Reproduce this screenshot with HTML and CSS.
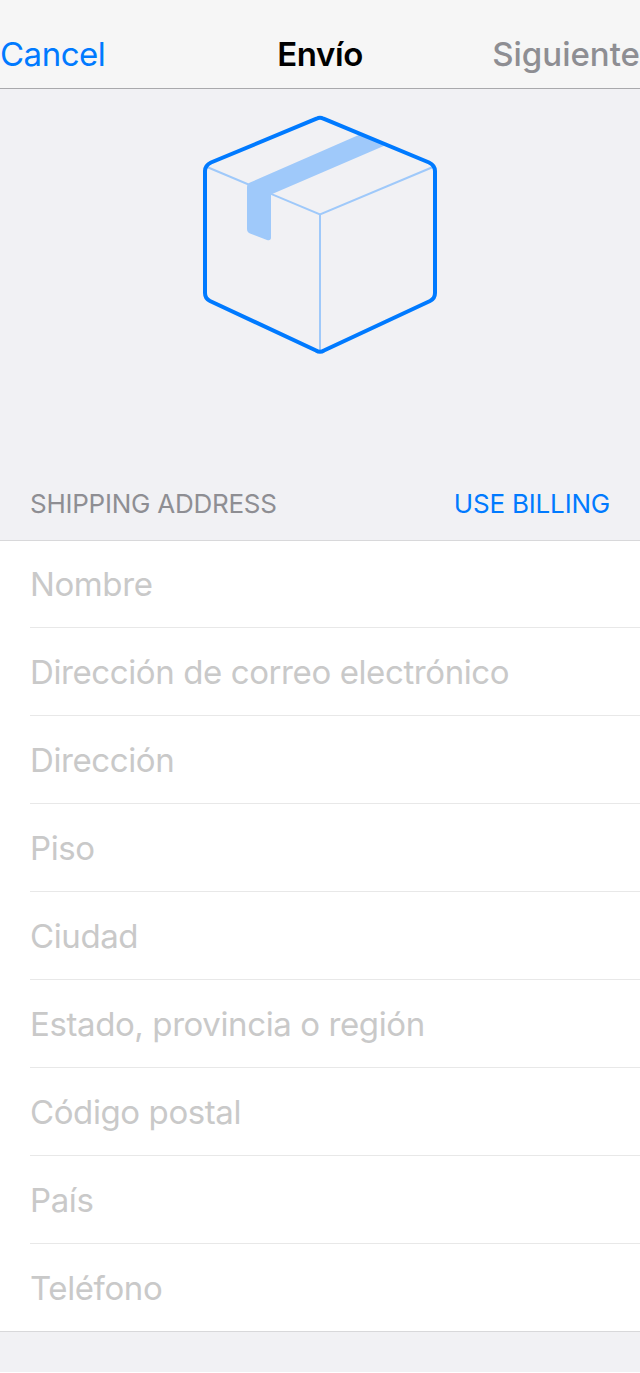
FILE: index.html
```html
<!DOCTYPE html>
<html lang="es">
<head>
<meta charset="utf-8">
<title>Envío</title>
<link rel="stylesheet" href="styles.css">
</head>
<body>
<div class="screen">
<header class="navbar">
<button class="nav-button cancel">Cancel</button>
<h1 class="title">Envío</h1>
<button class="nav-button next" disabled>Siguiente</button>
</header>
<main>
<div class="hero">
<svg class="box" width="240" height="244" viewBox="200 112 240 244" fill="none">
<path d="M207 167L320 214.500L433 167M320 215V351" stroke="#9fc9fa" stroke-width="2"/>
<path d="M361 134L250 182.500Q247 184 247 187V229Q247 232 250 233.500L267 240Q271 241 271 237.500V194.500L386 145Z" fill="#9fc9fa"/>
<path d="M316.500 118.700Q320 117 323.500 118.700L429 162.500Q435 165.500 435 171V293Q435 298.500 430 301L324 350.500Q320 353 316 350.500L210 301Q205 298.500 205 293V171Q205 165.500 211 162.500Z" stroke="#007aff" stroke-width="4"/>
</svg>
</div>
<div class="section-header">
<h2 class="section-title">SHIPPING ADDRESS</h2>
<button class="billing">USE BILLING</button>
</div>
<form class="fields">
<label class="field">Nombre</label>
<label class="field">Dirección de correo electrónico</label>
<label class="field">Dirección</label>
<label class="field">Piso</label>
<label class="field">Ciudad</label>
<label class="field">Estado, provincia o región</label>
<label class="field">Código postal</label>
<label class="field">País</label>
<label class="field">Teléfono</label>
</form>
</main>
</div>
</body>
</html>
```
FILE: styles.css
```css
*{box-sizing:border-box}
body{margin:0;background:#fff;font-family:Inter,"Liberation Sans",sans-serif}
.screen{height:1372px;background:#f1f1f4}
.navbar{height:89px;padding-top:20px;background:#f6f6f6;border-bottom:1px solid #a9a9ac;display:grid;grid-template-columns:1fr auto 1fr;align-items:center}
button{font:inherit;border:0;background:none;padding:0;margin:0}
.nav-button{font-size:33px;line-height:40px;white-space:nowrap}
.cancel{color:#007aff;justify-self:start;letter-spacing:-.5px}
.next{color:#8e8e93;justify-self:end;font-weight:500;letter-spacing:0}
.title{margin:0;font-size:33px;line-height:40px;font-weight:600;letter-spacing:-.4px;color:#000}
.hero{height:379px;padding-top:23px;display:flex;justify-content:center;align-items:flex-start}
.box{display:block}
.section-header{height:72px;padding:0 30px;display:flex;justify-content:space-between;align-items:center}
.section-title{margin:0;font-size:26px;line-height:32px;font-weight:400;color:#8e8e93;letter-spacing:-.25px}
.billing{font-size:26px;line-height:32px;color:#007aff;letter-spacing:-.2px}
.fields{background:#fff;border-top:1px solid #d8d8da;border-bottom:1px solid #d8d8da;height:792px}
.field{display:flex;align-items:center;height:88px;margin-left:30px;border-bottom:1px solid #e8e8e8;font-size:33px;line-height:40px;color:#c9c9c9;letter-spacing:-.4px}
.field:first-child{height:87px}
.field:last-child{border:0;height:87px}
```
